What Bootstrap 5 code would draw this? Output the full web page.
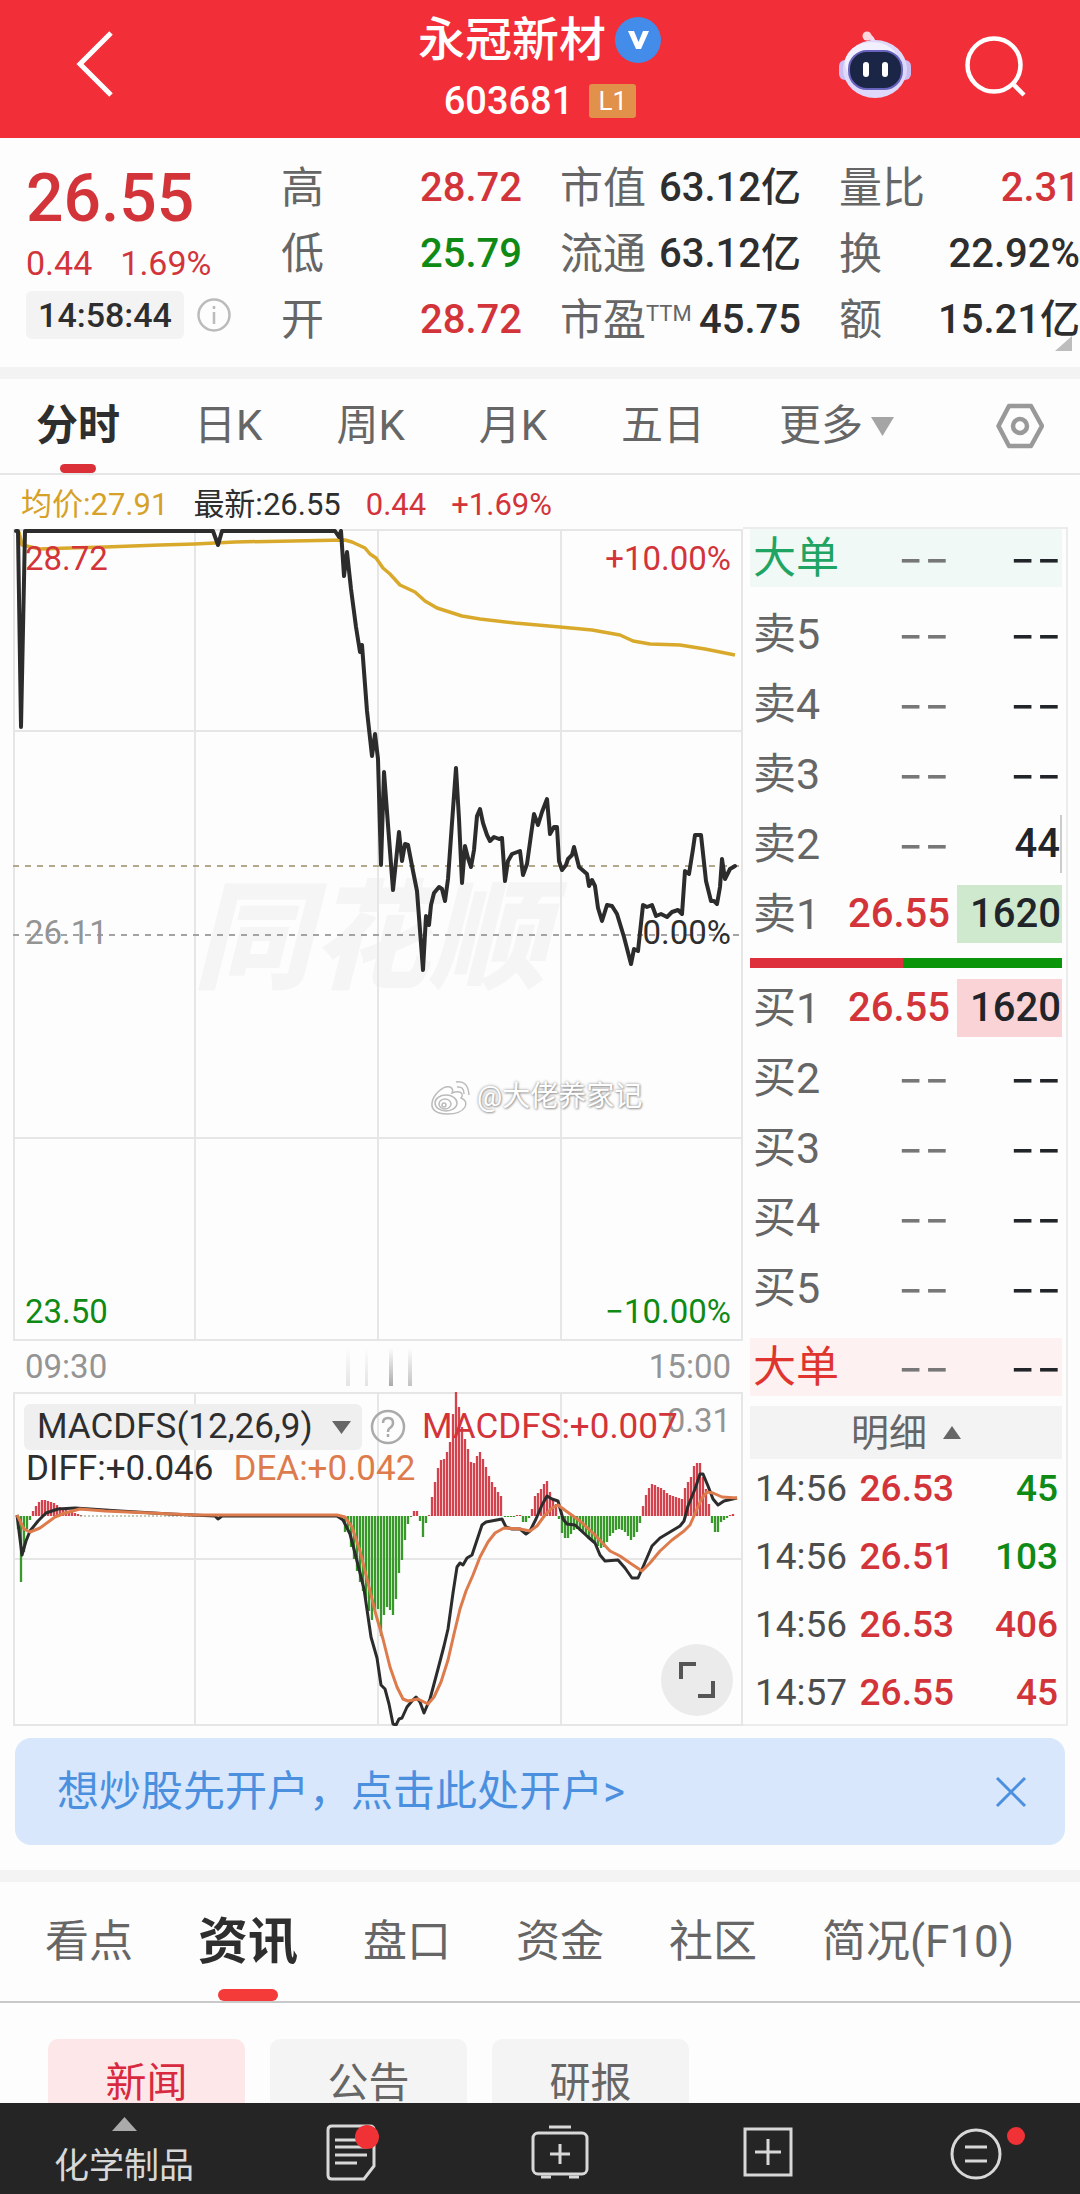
<!DOCTYPE html>
<html lang="zh-CN">
<head>
<meta charset="utf-8">
<meta name="viewport" content="width=device-width, initial-scale=1">
<title>永冠新材 603681</title>
<link href="https://cdn.jsdelivr.net/npm/bootstrap@5.3.0/dist/css/bootstrap.min.css" rel="stylesheet">
<style>
:root{--up:#d2343a;--down:#0f8a14;--ink:#2e2e2e;--soft:#666;--rule:#e4e4e4}
body{background:#fdfdfd;color:var(--ink);font-family:Roboto,"Noto Sans CJK SC",sans-serif;font-size:32px;line-height:40px;overflow-x:hidden}
button{font:inherit;color:inherit;background:none;border:0;padding:0}
a{color:inherit;text-decoration:none}
svg{display:block}
.up{color:var(--up)}.down{color:var(--down)}.soft{color:var(--soft)}.pale{color:#949494}
.topbar{background:#f22e38;color:#fff;display:grid;grid-template-columns:1fr auto 1fr;padding:0 54px;height:138px}
.topbar-mid{padding-top:13px}
.back{height:127px;padding-left:22px}
.stock-name{font-size:47px;line-height:54px;font-weight:500}
.stock-code{font-size:38px;line-height:36px;font-weight:500}
.lvl{background:#e2914b;font-size:26px;line-height:34px;width:47px;border-radius:3px;text-align:center;font-weight:400}
.quote{display:grid;grid-template-columns:217px repeat(3,1fr);column-gap:38px;padding:17px 0 14px 26px;position:relative}
.quote dl{display:grid;grid-auto-rows:66px}
.quote dl>div{display:flex;justify-content:space-between;align-items:center;white-space:nowrap}
.quote dt{font-size:43px;font-weight:400;color:var(--soft)}
.quote dt sup{font-size:22px;top:-14px;vertical-align:baseline;position:relative}
.quote dd{font-size:40px;font-weight:500;margin:0}
.last-price{font-size:66px;line-height:88px;font-weight:500}
.change{font-size:34px;line-height:40px;column-gap:28px}
.clock{background:#f3f3f3;font-size:34px;line-height:48px;width:158px;border-radius:6px;text-align:center;font-weight:500}
.corner{position:absolute;right:8px;bottom:16px}
.band{height:12px;background:#f3f3f3}
.period{height:96px;border-bottom:2px solid #e6e6e6;padding:0 36px;column-gap:74px;font-size:42px;color:var(--soft)}
.period button,.sections button{height:100%;position:relative;white-space:nowrap}
.period .on,.sections .on{color:var(--ink);font-weight:700}
.on::after{content:"";position:absolute;left:50%;bottom:0;background:#dc3038;border-radius:6px;transform:translateX(-50%)}
.period .on::after{width:36px;height:9px}
.legend-line{height:54px;padding:6px 21px 0;font-size:31px;column-gap:25px}
.gold{color:#d6a128}
.market{padding:0 12px 0 13px}
.charts{flex:1 1 0;min-width:0}
.pane{position:relative}
.tag{position:absolute;font-size:33px;line-height:40px}
.tag.l{left:12px}.tag.r{right:12px}
.t-top{top:10px}.t-mid{top:384px}.t-low{bottom:9px}
.times{height:51px;padding:0 12px;font-size:33px}
.owner{position:absolute;left:416px;top:548px;font-size:28px;color:#fff;text-shadow:0 0 3px #888,1px 1px 2px #aaa}
.macd-head{position:absolute;left:11px;top:12px;right:12px;font-size:35px;line-height:40px;white-space:nowrap}
.macd-pick{background:#efefef;border-radius:6px;width:338px;height:46px;padding:0 11px 0 13px}
.macd-row2{line-height:34px;column-gap:20px;padding-left:2px;margin-top:2px}
.dea{color:#dd7b4c}
.scale-max{position:absolute;right:12px;top:9px;font-size:33px}
.expand{position:absolute;right:10px;bottom:10px;width:72px;height:72px;border-radius:50%;background:#ebebeb}
.book{width:325px;border:2px solid #ececec;border-width:2px 2px 2px 0;padding:0 4px 0 7px;margin-top:-2px}
.book table{width:100%;table-layout:fixed;border-collapse:collapse}
.book td,.book th{padding:0;text-align:right;white-space:nowrap;font-weight:500}
.book th{text-align:left;padding-left:3px;font-size:43px;font-weight:400}
.depth td{font-size:40px}
.depth tr{height:70px}
.depth .c1{width:94px}.depth .c3{width:112px}
.depth .dash{font-family:Inter,sans-serif;font-size:58px;font-weight:300;line-height:40px}
.depth td:nth-child(2).dash{color:#777}
.lot{display:block;line-height:58px;margin-left:7px;padding-right:1px}
.lot.ask{background:#cfe9cf}.lot.bid{background:#fad3d7}.lot.edge{border-right:2px solid #ccc;padding:0}
.depth tr.big{height:58px}
.ask-big{background:#f0f9f5;color:#1fa463}.bid-big{background:#fdf2f1;color:#e0352f}
.ask-big th,.bid-big th{color:inherit}
.upper{margin-top:12px}.lower{margin-top:15px}
.ratio{height:10px;margin:9px 0 5px;background:#0a950a}
.ratio div{height:100%;background:#dd303c}
.detail{background:#f3f3f3;height:53px;margin-top:10px;font-size:38px;color:var(--soft);column-gap:16px}
.ticks tr{height:68px}
.ticks tr:last-child{height:60px}
.ticks td{font-size:37px;line-height:60px;vertical-align:top}
.ticks td:first-child{text-align:left;color:#4d4d4d;padding-left:5px;width:103px;font-weight:400}
.ticks td:nth-child(2){width:101px}.ticks td:last-child{padding-right:4px}
.promo{margin:12px 15px 25px;height:107px;border-radius:16px;background:#d8e7fc;color:#4b8fdf;font-size:42px;padding:0 38px 0 42px}
.sections{height:121px;border-bottom:2px solid #c9c9c9;padding:0 45px;column-gap:65px;font-size:44px;color:var(--soft)}
.sections .on{font-size:50px}
.sections .on::after{width:60px;height:12px;background:#f53a3a}
.feeds{padding:36px 48px 110px;column-gap:25px}
.feeds button{width:197px;height:88px;border-radius:10px;background:#f4f4f4;color:var(--soft);font-size:41px}
.feeds .sel{background:#fde7e9;color:#d8293f}
.dock{height:91px;padding-top:6px;background:#252525;color:#d8d8d8;display:grid;grid-template-columns:248px repeat(4,1fr);font-size:35px}
.dock a{display:flex;align-items:center;justify-content:center;position:relative}
</style>
<script src="https://cdn.jsdelivr.net/npm/bootstrap@5.3.0/dist/js/bootstrap.bundle.min.js"></script>
</head>
<body>
<header class="topbar">
  <button class="back d-flex align-items-center" aria-label="返回"><svg width="38" height="66" viewBox="0 0 38 66" fill="none" stroke="#fff" stroke-width="5"><path d="M35 2 4 33 35 64"/></svg></button>
  <div class="topbar-mid">
    <div class="d-flex align-items-center justify-content-center gap-2"><h1 class="stock-name m-0 text-nowrap">永冠新材</h1>
      <svg width="48" height="48" viewBox="0 0 48 48"><circle cx="24" cy="24" r="23" fill="#448ce9"/><path d="M14 15l6 0 4.500 11 4.500-11 6 0-8 18-5 0z" fill="#fff"/></svg></div>
    <div class="d-flex align-items-center justify-content-center stock-code mt-3"><span>603681</span><span class="lvl ms-3">L1</span></div>
  </div>
  <div class="d-flex justify-content-end align-items-center" style="height:131px;column-gap:54px">
    <button aria-label="智能助手"><svg width="72" height="72" viewBox="0 0 72 72"><path d="M35 14q-1-7-7-9" fill="none" stroke="#f3d9f2" stroke-width="4"/><circle cx="28" cy="6" r="4.500" fill="#fbd6dd"/><rect x="0" y="30" width="12" height="20" rx="6" fill="#c9bdf3"/><rect x="60" y="30" width="12" height="20" rx="6" fill="#c9bdf3"/><ellipse cx="36" cy="39" rx="32" ry="29" fill="#ded9fb"/><ellipse cx="33" cy="33" rx="27" ry="21" fill="#f2efff"/><rect x="10" y="21" width="53" height="38" rx="18" fill="#1b2545" stroke="#6863bd" stroke-width="2"/><rect x="24" y="32" width="6" height="15" rx="3" fill="#fff"/><rect x="43" y="32" width="6" height="15" rx="3" fill="#fff"/></svg></button>
    <button aria-label="搜索"><svg width="61" height="62" viewBox="0 0 61 62" fill="none" stroke="#fff" stroke-width="4.500"><circle cx="29" cy="30" r="26.500"/><path d="M47 48 59 60"/></svg></button>
  </div>
</header>

<section class="quote">
  <div>
    <div class="last-price up">26.55</div>
    <div class="change up d-flex"><span>0.44</span><span>1.69%</span></div>
    <div class="d-flex align-items-center gap-2 mt-2"><span class="clock">14:58:44</span>
      <svg class="ms-1" width="36" height="36" viewBox="0 0 36 36" fill="none" stroke="#bbb" stroke-width="2.500"><circle cx="18" cy="18" r="15.500"/><path d="M18 15v12M18 9v3"/></svg></div>
  </div>
  <dl class="m-0"><div><dt>高</dt><dd class="up">28.72</dd></div><div><dt>低</dt><dd class="down">25.79</dd></div><div><dt>开</dt><dd class="up">28.72</dd></div></dl>
  <dl class="m-0"><div><dt>市值</dt><dd>63.12亿</dd></div><div><dt>流通</dt><dd>63.12亿</dd></div><div><dt>市盈<sup>TTM</sup></dt><dd>45.75</dd></div></dl>
  <dl class="m-0"><div><dt>量比</dt><dd class="up">2.31</dd></div><div><dt>换</dt><dd>22.92%</dd></div><div><dt>额</dt><dd>15.21亿</dd></div></dl>
  <svg class="corner" width="17" height="15" viewBox="0 0 17 15"><path d="M17 0v15H0z" fill="#bdbdbd"/></svg>
</section>
<div class="band"></div>

<nav class="period d-flex align-items-center">
  <button class="on">分时</button><button>日K</button><button>周K</button><button>月K</button><button>五日</button>
  <button class="d-flex align-items-center gap-2">更多<svg width="23" height="19" viewBox="0 0 23 19"><path d="M0 0h23L11.500 19z" fill="#a5a5a5"/></svg></button>
  <button class="ms-auto" aria-label="设置"><svg class="mx-auto" width="48" height="46" viewBox="0 0 48 46" fill="none" stroke="#999" stroke-width="4.500" stroke-linejoin="round"><path d="M13 3h22l11 20-11 20H13L2.500 23z"/><circle cx="24" cy="23" r="7"/></svg></button>
</nav>
<div class="legend-line d-flex align-items-center"><span class="gold">均价:27.91</span><span>最新:26.55</span><span class="up">0.44</span><span class="up">+1.69%</span></div>

<main class="market d-flex">
  <div class="charts">
    <div class="pane">
      <svg class="w-100" viewBox="13 530 730 812" fill="none">
        <text x="370" y="980" text-anchor="middle" font-family="Noto Sans CJK SC" font-size="118" font-weight="900" font-style="italic" fill="#f5f5f5">同花顺</text>
        <g stroke="#e6e6e6" stroke-width="2"><path d="M14 531H742V1341H14zM195 531V1341M378 531V1341M561 531V1341M14 732H742M14 1139H742"/></g>
        <path d="M13 867H743" stroke="#b3a98a" stroke-width="2" stroke-dasharray="6 6"/>
        <path d="M13 936H743" stroke="#a3a3a3" stroke-width="2" stroke-dasharray="6 6"/>
        <polyline stroke="#d9a92c" stroke-width="3.500" stroke-linejoin="round" points="19,533 22,546 40,550 70,549 105,548 160,546 195,545 235,543 345,541 352,543 365,549 370,555 376,559 383,569 390,575 400,586 415,593 425,602 437,609 462,617 480,620 515,624 560,628 592,631 620,636 633,642 650,645 680,646 705,650 735,656"/>
        <polyline stroke="#2c2c2c" stroke-width="4" stroke-linejoin="round" stroke-linecap="round" points="16,532 18,532 21,728 25,532 213,532 218,546 222,532 335,532 339,538 341,532 344,577 347,553 351,590 356,628 360,653 362,646 367,712 372,757 375,735 378,760 381,866 384,773 388,826 393,891 399,833 402,862 405,845 408,846 413,872 417,892 423,971 426,917 429,926 431,906 434,894 439,888 442,890 445,902 448,880 452,824 456,769 459,820 462,884 465,847 468,859 471,868 474,851 477,817 480,810 483,824 487,836 490,842 494,838 499,840 502,839 505,882 508,862 512,855 520,852 523,876 527,865 531,836 534,815 538,826 542,813 547,800 550,835 554,828 557,828 559,862 562,871 566,866 568,860 572,856 574,848 579,868 587,875 589,887 592,881 595,887 598,909 602,922 607,906 612,907 617,915 624,938 631,965 634,950 638,952 643,906 647,908 652,906 656,917 661,915 667,918 672,913 678,911 682,915 685,872 689,875 693,850 695,836 701,836 706,882 711,902 714,902 717,905 720,888 722,860 725,880 730,870 735,867"/>
      </svg>
      <span class="tag l t-top up">28.72</span><span class="tag r t-top up">+10.00%</span>
      <span class="tag l t-mid pale">26.11</span><span class="tag r t-mid">0.00%</span>
      <span class="tag l t-low down">23.50</span><span class="tag r t-low down">−10.00%</span>
      <span class="owner d-flex align-items-center gap-1"><svg width="44" height="36" viewBox="0 0 44 36" fill="#fff" stroke="#bbb" stroke-width="1.500"><path d="M3 24C4 16 14 6 21 8q4 2 2 6 8-3 10 1 1 2-1 4 7 3 4 9-4 7-18 7C8 35 2 31 3 24z"/><ellipse cx="17" cy="24" rx="11" ry="8"/><ellipse cx="16" cy="25" rx="6" ry="5"/><circle cx="15" cy="26" r="2"/><path d="M27 3q12-2 13 13" fill="none"/><path d="M28 8q7-1 7 7" fill="none"/></svg>@大佬养家记</span>
    </div>
    <div class="times pale d-flex justify-content-between align-items-center"><span>09:30</span>
      <svg width="70" height="38" viewBox="0 0 70 38"><defs><linearGradient id="fade" x2="0" y2="1"><stop stop-color="#aaa" stop-opacity="0"/><stop offset="1" stop-color="#aaa"/></linearGradient></defs><g fill="url(#fade)"><path d="M3 0h4v38H3z" opacity=".3"/><path d="M22 0h3v38h-3z" opacity=".3"/><path d="M46 0h4v38h-4z"/><path d="M65 0h4v38h-4z" opacity=".7"/></g></svg>
      <span>15:00</span></div>
    <div class="pane">
      <svg class="w-100" viewBox="13 1393 730 334" fill="none">
        <g stroke="#e6e6e6" stroke-width="2"><path d="M14 1394H742V1726H14zM195 1394V1726M378 1394V1726M561 1394V1726M14 1560H742"/></g>
        <path id="upBars" stroke="#d4434d" stroke-width="2.300"/>
        <path id="downBars" stroke="#38982a" stroke-width="2.300"/>
        <path d="M80 1517H335" stroke="#8a9a70" stroke-dasharray="2 2"/>
        <polyline stroke="#2c2c2c" stroke-width="3" stroke-linejoin="round" points="17,1516 20,1540 22,1556 26,1542 30,1532 38,1522 46,1514 58,1510 75,1509 120,1512 170,1515 215,1517 218,1520 222,1517 337,1517 343,1521 350,1535 357,1562 364,1590 371,1638 377,1659 381,1686 385,1690 389,1705 393,1725 396,1726 399,1720 402,1719 407,1708 412,1702 416,1698 420,1703 424,1714 430,1700 438,1670 444,1647 448,1630 453,1594 457,1568 460,1564 463,1566 467,1559 472,1556 477,1541 482,1526 486,1523 502,1520 506,1528 512,1530 520,1530 526,1535 530,1532 536,1520 542,1506 547,1497 552,1500 558,1502 563,1520 567,1525 575,1526 588,1538 595,1544 600,1556 605,1562 618,1561 625,1569 632,1579 638,1579 643,1568 652,1547 660,1539 670,1533 680,1527 684,1522 688,1507 695,1490 700,1475 703,1475 708,1487 713,1500 718,1506 724,1502 737,1499"/>
        <polyline stroke="#dd7b4c" stroke-width="3" stroke-linejoin="round" points="17,1516 24,1530 30,1533 40,1529 55,1518 65,1514 80,1510 105,1512 195,1516 337,1516 345,1518 352,1528 360,1552 368,1584 376,1616 383,1640 390,1668 397,1688 403,1700 408,1702 418,1700 428,1705 434,1698 441,1683 448,1661 454,1635 460,1610 466,1592 473,1576 480,1558 488,1543 495,1534 504,1529 520,1530 530,1532 537,1527 545,1516 552,1509 558,1506 566,1512 580,1522 595,1536 610,1552 620,1557 630,1564 642,1572 650,1564 660,1552 672,1541 684,1532 690,1526 697,1510 702,1499 707,1493 713,1494 722,1498 737,1499"/>
      </svg>
      <span class="scale-max pale">0.31</span>
      <div class="macd-head">
        <div class="d-flex align-items-center"><button class="macd-pick d-flex align-items-center justify-content-between">MACDFS(12,26,9)<svg width="19" height="13" viewBox="0 0 19 13"><path d="M0 0h19L9.500 13z" fill="#666"/></svg></button>
          <svg class="mx-2" width="36" height="36" viewBox="0 0 36 36" fill="none" stroke="#aaa" stroke-width="2.500"><circle cx="18" cy="18" r="16"/><path d="M13 14q0-5 5-5t5 5q0 3-3 5-2 1-2 4M18 25v3"/></svg><span class="up ps-2">MACDFS:+0.007</span></div>
        <div class="macd-row2 d-flex"><span>DIFF:+0.046</span><span class="dea">DEA:+0.042</span></div>
      </div>
      <button class="expand" aria-label="全屏"><svg class="mx-auto" width="38" height="38" viewBox="0 0 38 38" fill="none" stroke="#555" stroke-width="4"><path d="M3 18V3h15M35 20v15H20"/></svg></button>
    </div>
  </div>

  <aside class="book">
    <table class="depth"><colgroup><col class="c1"><col><col class="c3"></colgroup>
      <tbody><tr class="big ask-big"><th>大单</th><td class="dash">--</td><td class="dash text-dark">--</td></tr></tbody></table>
    <table class="depth upper"><colgroup><col class="c1"><col><col class="c3"></colgroup><tbody class="soft">
      <tr><th>卖5</th><td class="dash">--</td><td class="dash text-dark">--</td></tr>
      <tr><th>卖4</th><td class="dash">--</td><td class="dash text-dark">--</td></tr>
      <tr><th>卖3</th><td class="dash">--</td><td class="dash text-dark">--</td></tr>
      <tr><th>卖2</th><td class="dash">--</td><td class="text-dark"><span class="lot edge">44</span></td></tr>
      <tr><th>卖1</th><td class="up">26.55</td><td class="text-dark"><span class="lot ask">1620</span></td></tr></tbody></table>
    <div class="ratio"><div style="width:49%"></div></div>
    <table class="depth"><colgroup><col class="c1"><col><col class="c3"></colgroup><tbody class="soft">
      <tr><th>买1</th><td class="up">26.55</td><td class="text-dark"><span class="lot bid">1620</span></td></tr>
      <tr><th>买2</th><td class="dash">--</td><td class="dash text-dark">--</td></tr>
      <tr><th>买3</th><td class="dash">--</td><td class="dash text-dark">--</td></tr>
      <tr><th>买4</th><td class="dash">--</td><td class="dash text-dark">--</td></tr>
      <tr><th>买5</th><td class="dash">--</td><td class="dash text-dark">--</td></tr></tbody></table>
    <table class="depth lower"><colgroup><col class="c1"><col><col class="c3"></colgroup>
      <tbody><tr class="big bid-big"><th>大单</th><td class="dash">--</td><td class="dash text-dark">--</td></tr></tbody></table>
    <button class="detail w-100 d-flex align-items-center justify-content-center">明细<svg width="18" height="13" viewBox="0 0 18 13"><path d="M0 13h18L9 0z" fill="#666"/></svg></button>
    <table class="ticks"><tbody>
      <tr><td>14:56</td><td class="up">26.53</td><td class="down">45</td></tr>
      <tr><td>14:56</td><td class="up">26.51</td><td class="down">103</td></tr>
      <tr><td>14:56</td><td class="up">26.53</td><td class="up">406</td></tr>
      <tr><td>14:57</td><td class="up">26.55</td><td class="up">45</td></tr></tbody></table>
  </aside>
</main>

<div class="promo d-flex align-items-center justify-content-between"><a href="#">想炒股先开户，点击此处开户&gt;</a>
  <button aria-label="关闭"><svg width="32" height="32" viewBox="0 0 32 32" stroke="#4b8fdf" stroke-width="3"><path d="M2 2 30 30M30 2 2 30"/></svg></button></div>
<div class="band"></div>
<nav class="sections d-flex align-items-center"><button>看点</button><button class="on">资讯</button><button>盘口</button><button>资金</button><button>社区</button><button>简况(F10)</button></nav>
<div class="feeds d-flex"><button class="sel">新闻</button><button>公告</button><button>研报</button></div>

<nav class="dock fixed-bottom">
  <a href="#" class="flex-column"><svg width="25" height="14" viewBox="0 0 25 14"><path d="M0 14h25L12.500 0z" fill="#aaa"/></svg><span class="mt-3">化学制品</span></a>
  <a href="#" aria-label="资讯"><svg width="54" height="60" viewBox="0 0 54 60" fill="none" stroke="#d8d8d8" stroke-width="3"><path d="M7 4h38q4 0 4 4v36L39 57H7q-4 0-4-4V8q0-4 4-4zM10 18h22M10 25h32M10 33h32M10 41h22"/><circle cx="42" cy="15" r="12" fill="#f03236" stroke="none"/></svg></a>
  <a href="#" aria-label="交易"><svg width="58" height="56" viewBox="0 0 58 56" fill="none" stroke="#d8d8d8" stroke-width="3"><rect x="2" y="9" width="54" height="41" rx="5"/><path d="M18 3h22M29 20v20M19 30h20M10 53h10M38 53h10"/></svg></a>
  <a href="#" aria-label="加自选"><svg width="50" height="50" viewBox="0 0 50 50" fill="none" stroke="#d8d8d8" stroke-width="3"><path d="M2 2h46v46H2zM25 12v26M12 25h26"/></svg></a>
  <a href="#" aria-label="更多"><svg width="98" height="56" viewBox="-2 0 98 56" fill="none" stroke="#d8d8d8" stroke-width="3"><circle cx="47" cy="30" r="24"/><path d="M36 23h22M36 37h22"/><circle cx="87" cy="12" r="9" fill="#f03236" stroke="none"/></svg></a>
</nav>
<script>
// MACD histogram: [x of first bar, end y of each bar], one bar every 3 units, zero line at 1517
const runs=[[18,1530,1583,1553,1530,1521,1512,1507,1503,1501,1501,1502,1503,1504,1506,1508,1510,1511,1512,1513,1514,1515,1516],
[345,1533,1530,1548,1560,1572,1583,1592,1600,1612,1621,1612,1610,1637,1616,1608,1611,1616,1600,1574,1561,1541,1525,1518,1512,1512,1522,1538,1524,1516,1498,1483,1469,1461,1460,1453,1443,1415,1393,1408,1428,1440,1450,1463,1464,1457,1453,1460,1468,1477,1483,1488,1493,1497],
[505,1518,1518,1518,1518,1516,1516,1523,1523,1519,1510,1497,1494,1490,1485,1482,1493,1500,1505,1520,1534,1539,1539,1535,1531,1530,1532,1533,1535,1538,1541,1544,1547,1549,1548,1543,1537,1534,1531,1530,1531,1533,1537,1541,1538,1533,1524,1507,1496,1489,1485,1486,1488,1489,1491,1494,1496,1497,1498,1499,1500,1489,1483,1478,1467,1464,1464,1478,1490,1505,1524,1533,1533,1523,1521,1519,1516,1515]];
let up='',down='';
for(const [x0,...ends] of runs)ends.forEach((y,i)=>{const s=`M${x0+3*i} 1517V${y}`;y<1517?up+=s:down+=s});
upBars.setAttribute('d',up);downBars.setAttribute('d',down);
</script>
</body>
</html>
